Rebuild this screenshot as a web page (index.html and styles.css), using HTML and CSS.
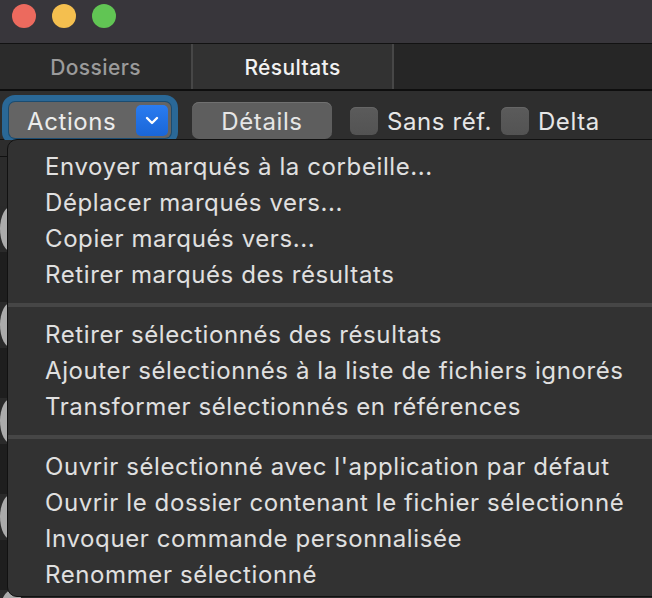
FILE: index.html
```html
<!DOCTYPE html>
<html lang="fr">
<head>
<meta charset="utf-8">
<title>Résultats</title>
<link rel="stylesheet" href="styles.css">
</head>
<body>
<div class="window">
  <div class="titlebar">
    <span class="light red"></span>
    <span class="light yellow"></span>
    <span class="light green"></span>
  </div>
  <div class="tabs">
    <div class="tab">Dossiers</div>
    <div class="tab active">Résultats</div>
    <div class="tab-rest"></div>
  </div>
  <div class="toolbar">
    <div class="popup">
      <span class="popup-label">Actions</span>
      <span class="chev"><svg width="14" height="9" viewBox="0 0 14 9"><path d="M2 2 L7 7 L12 2" fill="none" stroke="#fff" stroke-width="2.4" stroke-linecap="round" stroke-linejoin="round"/></svg></span>
    </div>
    <div class="btn">Détails</div>
    <div class="check"><span class="box"></span><span class="check-label">Sans réf.</span></div>
    <div class="check"><span class="box"></span><span class="check-label">Delta</span></div>
  </div>
  <div class="list">
    <div class="list-head"></div>
    <div class="row first"></div>
    <div class="row light"></div>
    <div class="row dark"></div>
    <div class="row light"></div>
    <div class="row dark"></div>
    <div class="row light"></div>
    <div class="row dark"></div>
    <div class="row light"></div>
    <div class="row dark"></div>
    <div class="row light"></div>
  </div>
  <div class="menu">
    <div class="item">Envoyer marqués à la corbeille...</div>
    <div class="item">Déplacer marqués vers...</div>
    <div class="item">Copier marqués vers...</div>
    <div class="item">Retirer marqués des résultats</div>
    <div class="sep"></div>
    <div class="item">Retirer sélectionnés des résultats</div>
    <div class="item">Ajouter sélectionnés à la liste de fichiers ignorés</div>
    <div class="item">Transformer sélectionnés en références</div>
    <div class="sep"></div>
    <div class="item">Ouvrir sélectionné avec l'application par défaut</div>
    <div class="item">Ouvrir le dossier contenant le fichier sélectionné</div>
    <div class="item">Invoquer commande personnalisée</div>
    <div class="item">Renommer sélectionné</div>
  </div>
</div>
</body>
</html>
```
FILE: styles.css
```css
html, body {
  margin: 0;
  padding: 0;
  background: #2a2a2a;
  overflow: hidden;
}
.window {
  position: relative;
  width: 652px;
  height: 598px;
  overflow: hidden;
  font-family: Inter, "Liberation Sans", sans-serif;
  display: flex;
  flex-direction: column;
}
.titlebar {
  flex: none;
  height: 44px;
  box-sizing: border-box;
  background: #38363b;
  border-bottom: 1px solid #121212;
  display: flex;
  align-items: flex-start;
  gap: 16px;
  padding: 4px 0 0 12px;
}
.light {
  width: 24px;
  height: 24px;
  border-radius: 50%;
  display: block;
}
.red { background: #ec6a5e; }
.yellow { background: #f4bf4f; }
.green { background: #61c554; }
.tabs {
  flex: none;
  display: flex;
  height: 47px;
  box-sizing: border-box;
  border-bottom: 2px solid #0e0e0e;
  background: #262626;
}
.tab {
  width: 191px;
  display: flex;
  align-items: center;
  justify-content: center;
  padding-top: 1px;
  font-size: 21px;
  letter-spacing: 0.4px;
  font-weight: 500;
  color: #9b9b9b;
  background: #2b2b2b;
  border-right: 2px solid #474747;
}
.tab.active {
  width: 199px;
  color: #f2f2f2;
  background: #323232;
}
.tab-rest { flex: 1; }
.toolbar {
  flex: none;
  height: 49px;
  box-sizing: border-box;
  background: #2e2e2e;
  border-bottom: 1px solid #141414;
  display: flex;
  align-items: flex-start;
  padding: 11px 0 0 9px;
}
.popup {
  width: 162px;
  height: 36px;
  box-sizing: border-box;
  border-radius: 6px;
  background: #646464;
  box-shadow: 0 0 0 1px #1c4c70, 0 0 0 7px #2a6897;
  display: flex;
  align-items: center;
  justify-content: space-between;
  padding: 0 3px 0 18px;
  color: #ececec;
  font-size: 24px;
  letter-spacing: 0.6px;
}
.popup-label { padding-top: 2px; }
.chev {
  width: 32px;
  height: 31px;
  border-radius: 5px;
  background: linear-gradient(#2a7cf0, #1a66d8);
  display: flex;
  align-items: center;
  justify-content: center;
}
.btn {
  margin-left: 21px;
  width: 140px;
  height: 37px;
  box-sizing: border-box;
  padding-top: 1px;
  border-radius: 7px;
  background: #5e5e5e;
  box-shadow: inset 0 1px 0 #707070;
  color: #e6e6e6;
  font-size: 24px;
  letter-spacing: 0.6px;
  display: flex;
  align-items: center;
  justify-content: center;
}
.check {
  display: flex;
  align-items: center;
  height: 37px;
  margin-left: 18px;
  color: #e6e6e6;
  font-size: 24px;
  letter-spacing: 0.6px;
  gap: 9px;
}
.check-label { padding-top: 2px; }
.check + .check { margin-left: 9px; }
.box {
  width: 28px;
  height: 28px;
  border-radius: 6px;
  background: linear-gradient(#5b5b5b, #535353);
  box-shadow: inset 0 1px 0 #666;
}
.list {
  flex: 1;
  min-height: 0;
  overflow: hidden;
  display: flex;
  flex-direction: column;
}
.list-head {
  flex: none;
  height: 17px;
  box-sizing: border-box;
  background: #2d2d2d;
  border-bottom: 1px solid #111;
}
.row { flex: none; }
.row.first { height: 49px; background: #2b2b2b; }
.row.light { height: 46px; background: #ababab; }
.row.dark { height: 50px; background: #1e1e1e; }
.menu {
  position: absolute;
  left: 7px;
  top: 139px;
  width: 680px;
  height: 458px;
  box-sizing: border-box;
  border: 1px solid #111;
  border-radius: 10px;
  background: #323232;
  padding-top: 9px;
  color: #e0e0e0;
  font-size: 24px;
  letter-spacing: 0.6px;
}
.item {
  height: 36px;
  line-height: 36px;
  padding-left: 37px;
  white-space: nowrap;
}
.sep {
  height: 4px;
  margin: 10px 0;
  background: #464646;
}
```
